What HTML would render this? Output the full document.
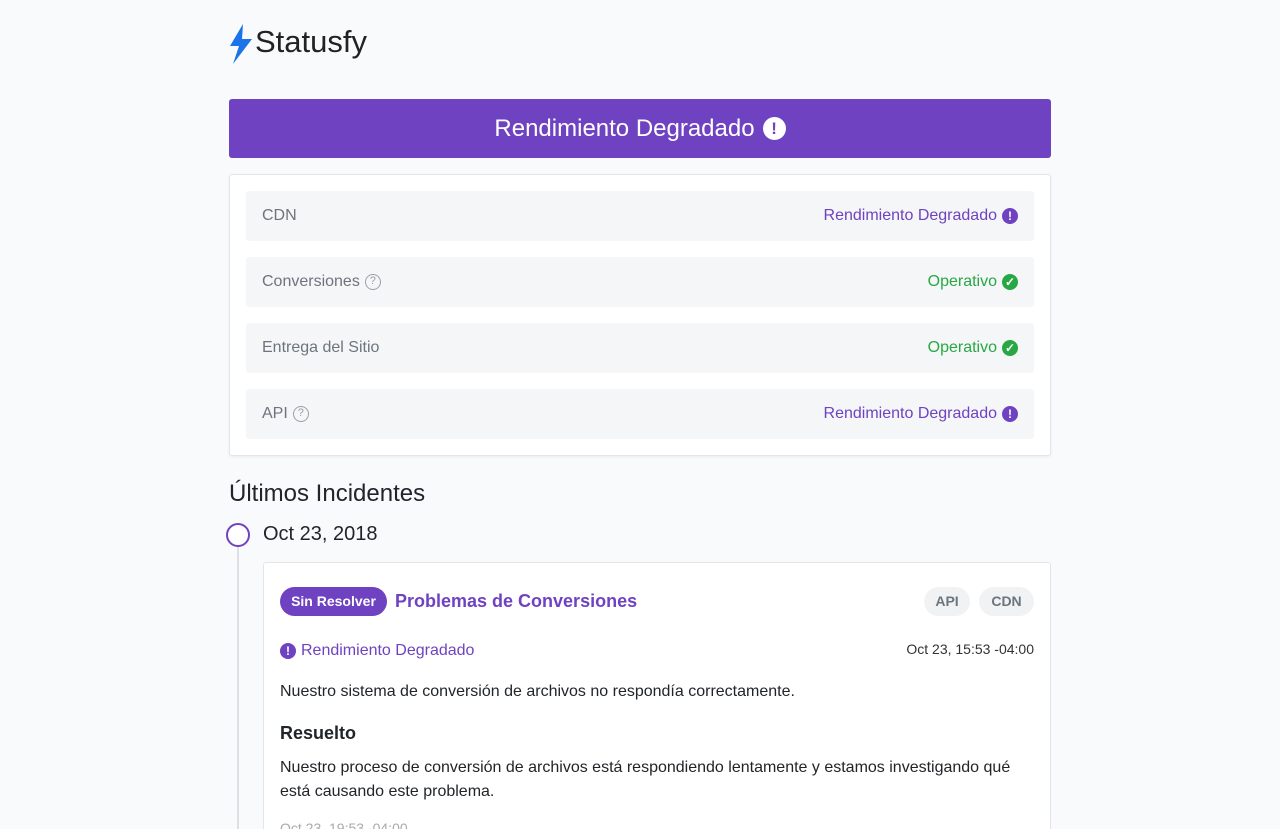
<!DOCTYPE html>
<html><head><meta charset="utf-8"><style>
*{box-sizing:border-box;margin:0;padding:0}
html,body{width:1280px;height:829px;overflow:hidden}
body{background:#f9fafc;font-family:"Liberation Sans",sans-serif;color:#212529;position:relative}
.a{position:absolute}
.row{position:absolute;left:246px;width:788px;height:50px;background:#f5f6f8;border-radius:3px}
.row .l{position:absolute;left:16px;top:0;height:50px;font-size:16px;color:#6c757d;display:flex;align-items:center}
.row .r{position:absolute;right:16px;top:0;height:50px;font-size:16px;display:flex;align-items:center}
.pur{color:#6f42c1}.grn{color:#28a745}
.ic{display:inline-block;width:16px;height:16px;border-radius:50%;margin-left:5px;text-align:center;color:#fff;font-size:12px;line-height:16px;font-weight:bold}
.q{display:inline-block;width:16px;height:16px;border:1.5px solid #9aa0a6;border-radius:50%;color:#9aa0a6;font-size:11px;line-height:13px;text-align:center;margin-left:5px}
.tag{position:absolute;top:587px;height:29px;background:#f1f2f4;border-radius:15px;font-size:14px;font-weight:bold;color:#6c757d;line-height:29px;text-align:center}
</style></head><body>
<svg class="a" style="left:229px;top:24px" width="24" height="40" viewBox="0 0 24 40"><path d="M14 0 L1 22 H10 L4 40 L23 15 H13 Z" fill="#1a73e8"/></svg>
<div class="a" style="left:255px;top:24px;font-size:31px;color:#222">Statusfy</div>
<div class="a" style="left:229px;top:99px;width:822px;height:59px;background:#6f42c1;border-radius:3px;color:#fff;font-size:24px;display:flex;align-items:center;justify-content:center">Rendimiento Degradado <span style="display:inline-block;width:23px;height:23px;border-radius:50%;background:#fff;color:#6f42c1;font-size:17px;line-height:23px;font-weight:bold;text-align:center;margin-left:8px">!</span></div>
<div class="a" style="left:229px;top:174px;width:822px;height:282px;background:#fff;border:1px solid #e3e5e8;border-radius:3px;box-shadow:0 1px 3px rgba(0,0,0,.06)"></div>
<div class="row" style="top:191px"><span class="l">CDN</span><span class="r pur">Rendimiento Degradado<span class="ic" style="background:#6f42c1">!</span></span></div>
<div class="row" style="top:257px"><span class="l">Conversiones<span class="q">?</span></span><span class="r grn">Operativo<span class="ic" style="background:#28a745">✓</span></span></div>
<div class="row" style="top:323px"><span class="l">Entrega del Sitio</span><span class="r grn">Operativo<span class="ic" style="background:#28a745">✓</span></span></div>
<div class="row" style="top:389px"><span class="l">API<span class="q">?</span></span><span class="r pur">Rendimiento Degradado<span class="ic" style="background:#6f42c1">!</span></span></div>
<div class="a" style="left:229px;top:480px;font-size:24px">Últimos Incidentes</div>
<div class="a" style="left:237px;top:545px;width:2px;height:290px;background:#dde0e4"></div>
<div class="a" style="left:226px;top:523px;width:24px;height:24px;border:2px solid #6f42c1;border-radius:50%;background:#fff"></div>
<div class="a" style="left:263px;top:523px;font-size:20px">Oct 23, 2018</div>
<div class="a" style="left:263px;top:562px;width:788px;height:280px;background:#fff;border:1px solid #e3e5e8;border-radius:3px"></div>
<div class="a" style="left:280px;top:587px;width:107px;height:29px;background:#6f42c1;border-radius:15px;color:#fff;font-size:14px;font-weight:bold;text-align:center;line-height:29px">Sin Resolver</div>
<div class="a pur" style="left:395px;top:591px;font-size:18px;font-weight:bold">Problemas de Conversiones</div>
<div class="tag" style="left:924px;width:46px">API</div>
<div class="tag" style="left:979px;width:55px">CDN</div>
<div class="a pur" style="left:280px;top:642px;font-size:16px;display:flex;align-items:center"><span class="ic" style="background:#6f42c1;margin:0 5px 0 0">!</span>Rendimiento Degradado</div>
<div class="a" style="right:246px;top:641px;font-size:14px;color:#333">Oct 23, 15:53 -04:00</div>
<div class="a" style="left:280px;top:683px;font-size:16px">Nuestro sistema de conversión de archivos no respondía correctamente.</div>
<div class="a" style="left:280px;top:723px;font-size:18px;font-weight:bold">Resuelto</div>
<div class="a" style="left:280px;top:756px;width:760px;font-size:16px;line-height:24px">Nuestro proceso de conversión de archivos está respondiendo lentamente y estamos investigando qué está causando este problema.</div>
<div class="a" style="left:280px;top:820px;font-size:14px;color:#aaa">Oct 23, 19:53 -04:00</div>
</body></html>
